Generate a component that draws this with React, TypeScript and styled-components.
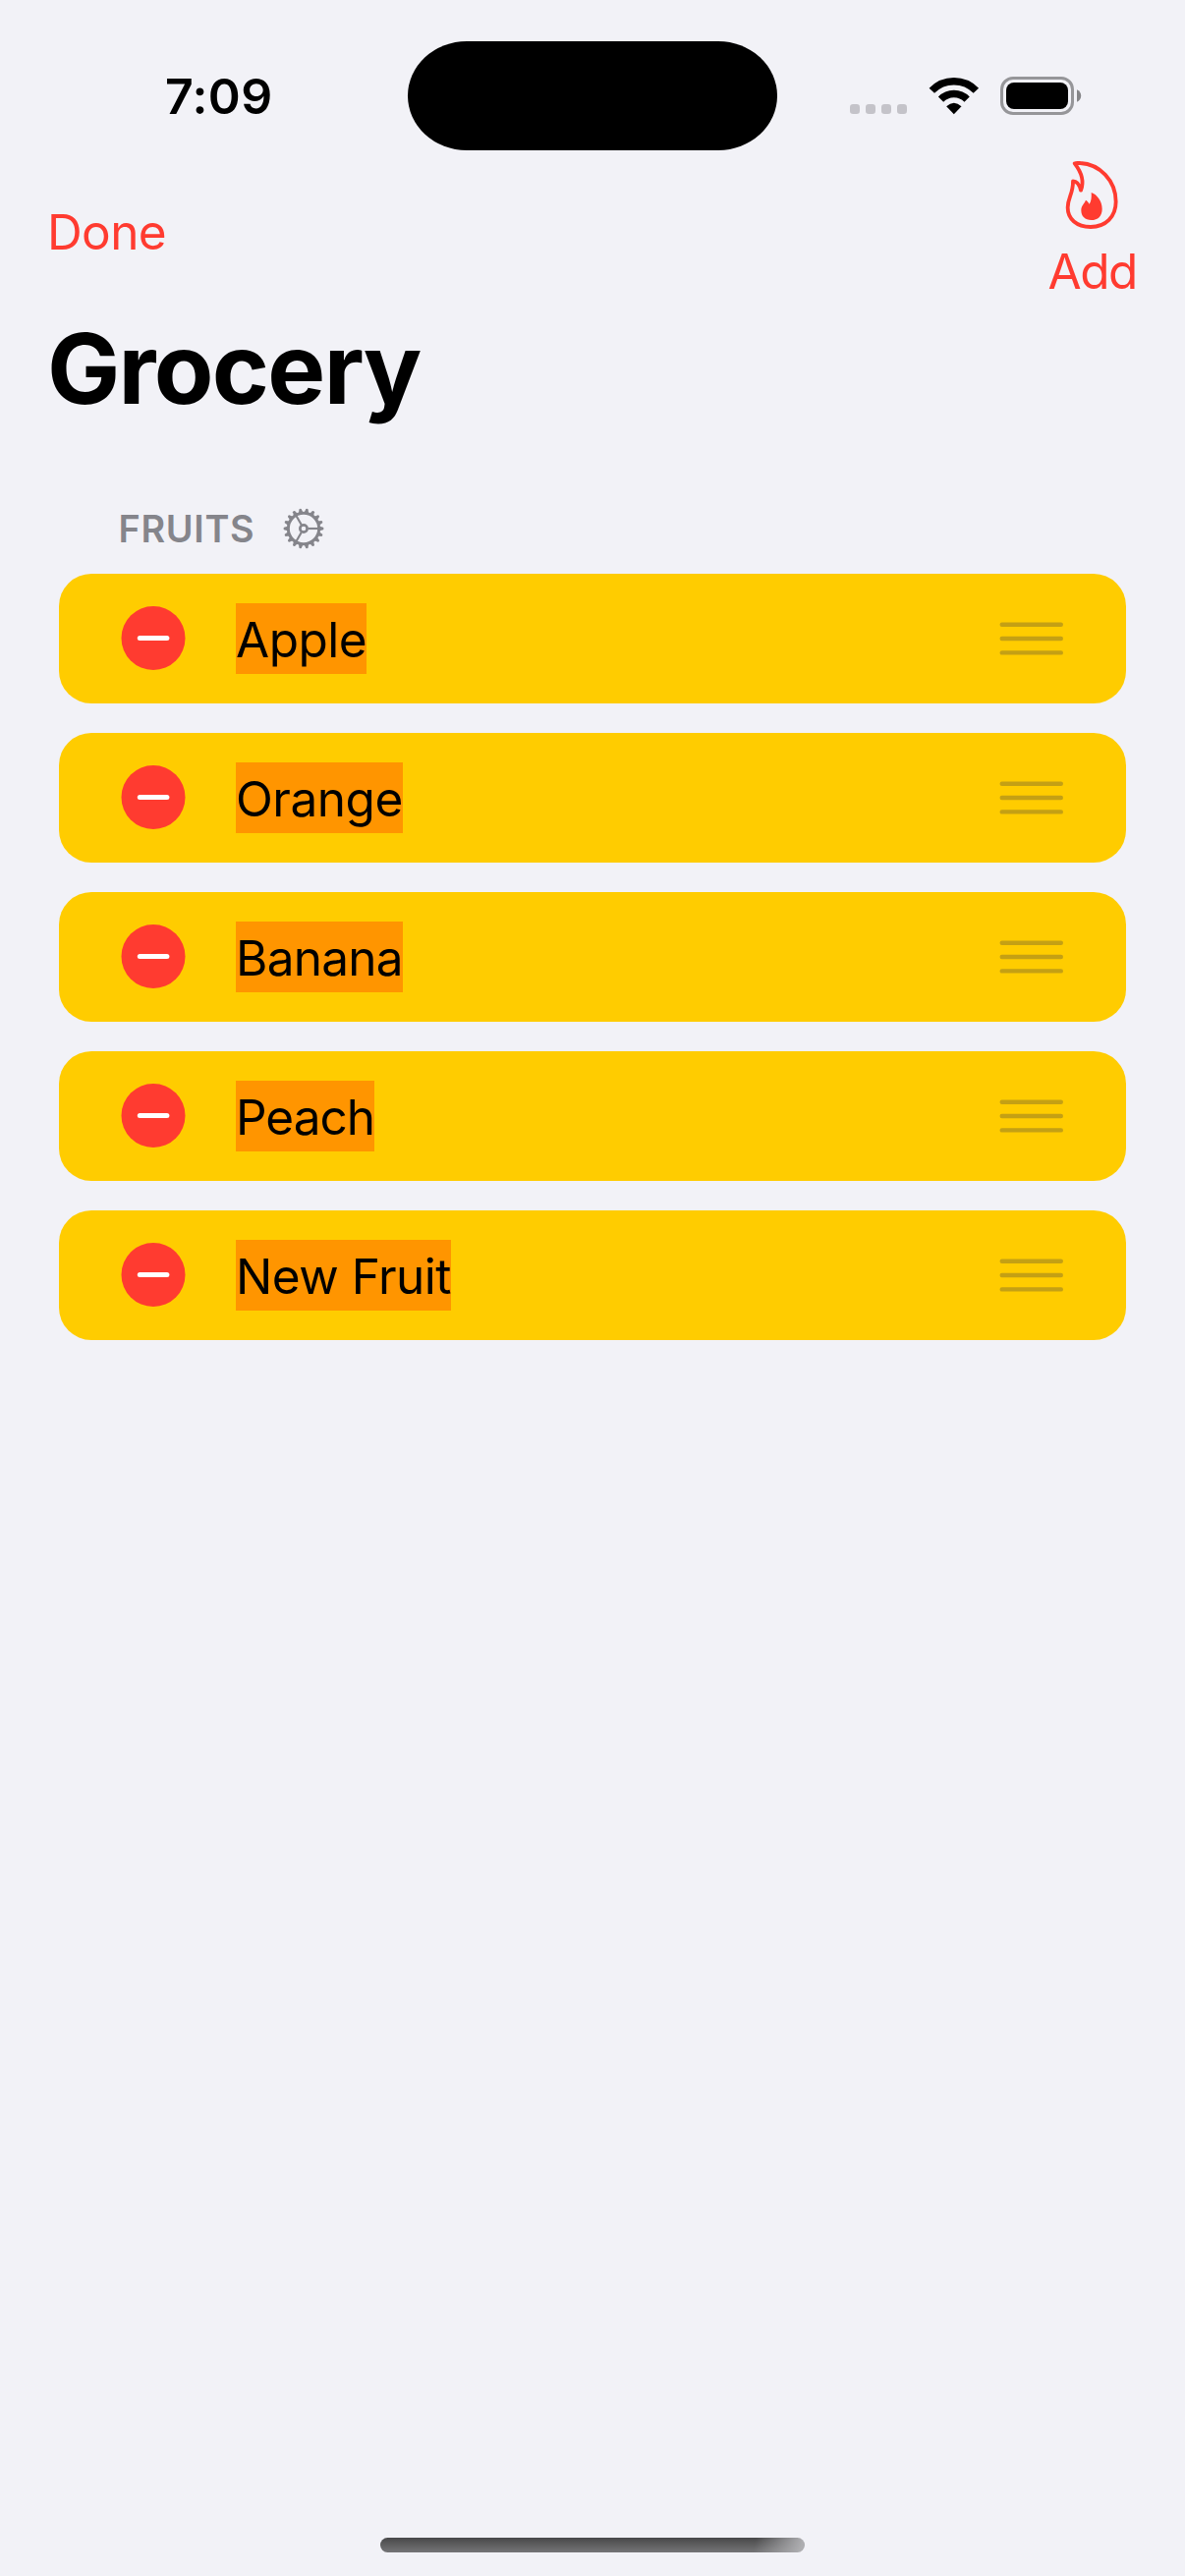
import React from "react";
import styled, { createGlobalStyle } from "styled-components";

const GlobalStyle = createGlobalStyle`
  *, *::before, *::after { box-sizing: border-box; }
  body {
    margin: 0;
    background: #f2f2f7;
    font-family: Inter, "Liberation Sans", sans-serif;
  }
  button {
    border: 0;
    padding: 0;
    background: none;
    font: inherit;
    color: inherit;
  }
`;

const Screen = styled.div`
  display: flex;
  flex-direction: column;
  width: 1206px;
  height: 2622px;
  padding-bottom: 24px;
  overflow: hidden;
  background: #f2f2f7;
  color: #000;
`;

const StatusBar = styled.header`
  display: grid;
  grid-template-columns: 415px 376px 415px;
  align-items: center;
  height: 162px;
  padding: 42px 0 9px;
`;

const Clock = styled.time`
  padding-left: 168px;
  font-size: 50px;
  line-height: 60px;
  font-weight: 600;
  letter-spacing: 0.4px;
`;

const Island = styled.div`
  height: 111px;
  border-radius: 60px / 55.5px;
  background: #000;
`;

const StatusIcons = styled.div`
  display: flex;
  align-items: center;
  height: 39px;
  padding-left: 74px;
`;

const SignalDots = styled.div`
  display: flex;
  gap: 6px;
  align-self: flex-end;
  margin-bottom: 1px;
`;

const Dot = styled.i`
  width: 10px;
  height: 10px;
  border-radius: 3.2px;
  background: #c4c3c9;
`;

const WifiGlyph = styled.svg`
  display: block;
  width: 52px;
  height: 39px;
  margin-left: 22px;
`;

const BatteryGlyph = styled.svg`
  display: block;
  width: 84px;
  height: 39px;
  margin-left: 21px;
`;

const NavBar = styled.nav`
  display: flex;
  justify-content: space-between;
  align-items: flex-start;
  height: 148px;
  padding: 0 49px 0 48px;
  color: #ff3b30;
  font-size: 49.5px;
  line-height: 60px;
`;

const DoneButton = styled.button`
  margin-top: 44px;
  letter-spacing: -0.6px;
`;

const AddButton = styled.button`
  display: flex;
  flex-direction: column;
  align-items: center;
  letter-spacing: -1.4px;
`;

const FlameGlyph = styled.svg`
  display: block;
  width: 56.67px;
  height: 73px;
  margin-bottom: 11px;
`;

const Title = styled.h1`
  margin: 0;
  padding-left: 48px;
  font-size: 99px;
  line-height: 130px;
  font-weight: 700;
  letter-spacing: -1.7px;
`;

const SectionHeader = styled.h2`
  display: flex;
  align-items: center;
  gap: 28.5px;
  height: 92px;
  margin: 52px 0 0;
  padding-left: 120.5px;
  color: #85858b;
  font-size: 37.8px;
  font-weight: 600;
  letter-spacing: 0.7px;
`;

const GearGlyph = styled.svg`
  display: block;
  width: 42px;
  height: 42px;
`;

const List = styled.ul`
  display: flex;
  flex-direction: column;
  gap: 30px;
  margin: 0 60px;
  padding: 0;
  list-style: none;
`;

const Row = styled.li`
  display: flex;
  align-items: center;
  height: 132px;
  padding: 0 63px;
  border-radius: 33px;
  background: #ffcc00;
`;

const DeleteGlyph = styled.svg`
  display: block;
  width: 66px;
  height: 66px;
`;

const DeleteButton = styled.button`
  margin-right: 51px;
`;

const Label = styled.span<{ $tracking: number }>`
  height: 72px;
  background: #ff9500;
  font-size: 49.5px;
  line-height: 74px;
  letter-spacing: ${(p) => p.$tracking}px;
  white-space: nowrap;
`;

const GripGlyph = styled.svg`
  display: block;
  width: 66px;
  height: 36px;
  margin-left: auto;
`;

const HomeIndicator = styled.div`
  width: 432px;
  height: 15px;
  margin: auto auto 0 387px;
  border-radius: 8px;
  background:
    linear-gradient(100deg, rgba(178, 178, 181, 0) 88%, rgba(178, 178, 181, 0.95) 99%),
    linear-gradient(#484849, #757577);
`;

const TEETH = Array.from({ length: 18 }, (_, i) => i * 20);
const SPOKES = [0, 120, 240];

function Gear() {
  return (
    <GearGlyph viewBox="-63 -63 126 126" fill="none" stroke="currentColor">
      <circle r="47" strokeWidth="9" />
      <circle r="11" strokeWidth="8" />
      {SPOKES.map((a) => (
        <path key={a} d="M14 0H46" strokeWidth="6.5" transform={`rotate(${a})`} />
      ))}
      {TEETH.map((a) => (
        <path
          key={a}
          d="M49 -6.5L60 -3.5Q63 0 60 3.5L49 6.5Z"
          fill="currentColor"
          stroke="none"
          transform={`rotate(${a})`}
        />
      ))}
    </GearGlyph>
  );
}

function Flame() {
  return (
    <FlameGlyph viewBox="130 66 170 219">
      <path
        d="M162 79C166 77 172 77 179 78C238 81 288 131 288 196C288 242 257 273 211 273C168 273 141 249 141 214C141 183 158 172 157 133C170 133 177 145 181 161C193 131 180 102 162 79Z"
        fill="none"
        stroke="currentColor"
        strokeWidth="11.5"
        strokeLinejoin="round"
      />
      <path
        d="M213 168C231 174 246 195 246 218C246 240 233 252 213 252C194 252 182 241 182 222C182 208 191 203 196 191C201 193 204 198 207 203C213 195 214 182 213 168Z"
        fill="currentColor"
      />
    </FlameGlyph>
  );
}

function Wifi() {
  return (
    <WifiGlyph viewBox="314 84 156 117" fill="none" stroke="#000">
      <path d="M323.9 126.7A94 94 0 0 1 459.1 126.7" strokeWidth="22.5" />
      <path d="M351.6 153.4A55.5 55.5 0 0 1 431.4 153.4" strokeWidth="22" />
      <path d="M391.5 198.5L368.5 175Q391.5 153 414.5 175Z" fill="#000" stroke="none" />
    </WifiGlyph>
  );
}

function Battery() {
  return (
    <BatteryGlyph viewBox="0 0 84 39">
      <rect x="1.5" y="1.5" width="72" height="36" rx="11.5" fill="none" stroke="#969699" strokeWidth="3" />
      <rect x="6" y="6" width="63" height="27" rx="8" fill="#000" />
      <path d="M78 13.2C80.6 14.3 82.2 16.7 82.2 19.5S80.6 24.7 78 25.8Z" fill="#858588" />
    </BatteryGlyph>
  );
}

function Minus() {
  return (
    <DeleteGlyph viewBox="0 0 66 66">
      <circle cx="33" cy="32.5" r="32.5" fill="#ff3b30" />
      <rect x="16.8" y="30" width="32.6" height="5" rx="2.5" fill="#fff" />
    </DeleteGlyph>
  );
}

function Grip() {
  return (
    <GripGlyph viewBox="0 0 66 36" stroke="rgba(60, 60, 67, 0.3)" strokeWidth="4.4" strokeLinecap="round">
      <path d="M2.7 3.7H62.8M2.7 18H62.8M2.7 32.4H62.8" />
    </GripGlyph>
  );
}

const FRUITS = [
  { name: "Apple", tracking: -0.5 },
  { name: "Orange", tracking: -0.5 },
  { name: "Banana", tracking: -0.75 },
  { name: "Peach", tracking: -1.0 },
  { name: "New Fruit", tracking: -0.5 },
];

export default function App() {
  return (
    <>
      <GlobalStyle />
      <Screen>
        <StatusBar>
          <Clock>7:09</Clock>
          <Island />
          <StatusIcons>
            <SignalDots>
              <Dot />
              <Dot />
              <Dot />
              <Dot />
            </SignalDots>
            <Wifi />
            <Battery />
          </StatusIcons>
        </StatusBar>
        <NavBar>
          <DoneButton>Done</DoneButton>
          <AddButton>
            <Flame />
            Add
          </AddButton>
        </NavBar>
        <Title>Grocery</Title>
        <SectionHeader>
          FRUITS
          <Gear />
        </SectionHeader>
        <List>
          {FRUITS.map((fruit) => (
            <Row key={fruit.name}>
              <DeleteButton aria-label={`Delete ${fruit.name}`}>
                <Minus />
              </DeleteButton>
              <Label $tracking={fruit.tracking}>{fruit.name}</Label>
              <Grip />
            </Row>
          ))}
        </List>
        <HomeIndicator />
      </Screen>
    </>
  );
}
